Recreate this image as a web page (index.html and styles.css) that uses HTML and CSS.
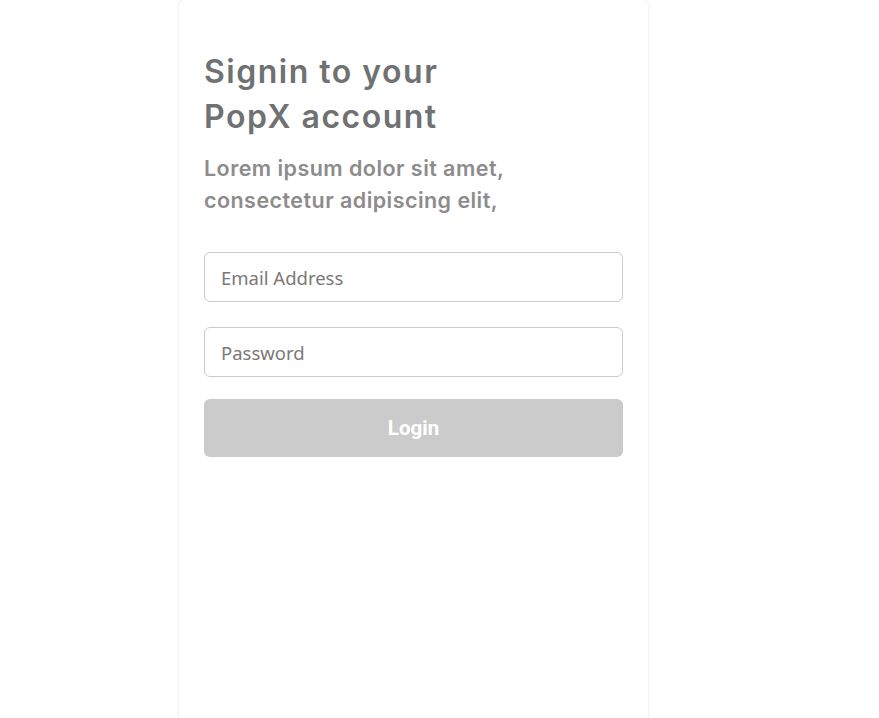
FILE: index.html
```html
<!DOCTYPE html>
<html lang="en">
<head>
<meta charset="utf-8">
<title>PopX Signin</title>
<link rel="stylesheet" href="styles.css">
</head>
<body>
<main class="card">
  <h1 class="title">Signin to your<br>PopX account</h1>
  <p class="subtitle">Lorem ipsum dolor sit amet,<br>consectetur adipiscing elit,</p>
  <form class="form">
    <input class="field" type="email" placeholder="Email Address">
    <input class="field" type="password" placeholder="Password">
    <button class="login" type="button">Login</button>
  </form>
</main>
</body>
</html>
```
FILE: styles.css
```css
html, body {
  margin: 0;
  padding: 0;
  background: #ffffff;
}
body {
  font-family: "Inter", "Noto Sans", sans-serif;
  height: 718px;
  overflow: hidden;
}
.card {
  box-sizing: border-box;
  width: 469px;
  min-height: 740px;
  margin-left: 179px;
  padding: 49px 25px 0 25px;
  background: #fff;
  border-radius: 6px;
  box-shadow: 0 0 3px rgba(0, 0, 0, 0.12);
}
.title {
  margin: 0;
  font-size: 32px;
  line-height: 45px;
  font-weight: 600;
  color: #6f7173;
  letter-spacing: 1.5px;
}
.subtitle {
  margin: 13px 0 0 0;
  font-size: 21.5px;
  line-height: 32px;
  font-weight: 600;
  color: #8d8b8b;
  letter-spacing: 0.45px;
}
.form {
  margin-top: 36px;
  display: flex;
  flex-direction: column;
}
.field {
  box-sizing: border-box;
  height: 50px;
  border: 1px solid #cbcbcb;
  border-radius: 6px;
  padding: 0 16px;
  font-family: "Noto Sans", "Open Sans", sans-serif;
  font-size: 18.5px;
  color: #333;
  outline: none;
  margin-bottom: 25px;
}
.field::placeholder {
  color: #7b7878;
}
.field + .field {
  margin-bottom: 22px;
}
.login {
  height: 58px;
  border: none;
  border-radius: 6px;
  background: #cbcbcb;
  color: #ffffff;
  font-family: "Roboto", "Inter", sans-serif;
  font-size: 20.5px;
  font-weight: 700;
}
```
